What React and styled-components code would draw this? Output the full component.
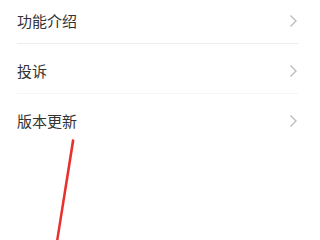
import React from "react";
import styled, { createGlobalStyle } from "styled-components";

const GlobalStyle = createGlobalStyle`
  html, body {
    margin: 0;
    padding: 0;
    background: #ffffff;
    overflow: hidden;
  }
  body {
    font-family: "Noto Sans CJK SC", "Noto Sans", sans-serif;
  }
`;

const items = [
  { label: "功能介绍", line: "#ececec" },
  { label: "投诉", line: "#f5f5f5" },
  { label: "版本更新", line: "transparent" },
];

function App() {
  return (
    <>
      <GlobalStyle />
      <StyledPage>
        <StyledList>
          {items.map((item) => (
            <StyledRow key={item.label} line={item.line}>
              <StyledLabel>{item.label}</StyledLabel>
              <Chevron />
            </StyledRow>
          ))}
        </StyledList>
        <StyledMark width="320" height="240" viewBox="0 0 320 240">
          <polygon points="72,139 74.5,140 58.5,240 56,240" fill="#e8302c" />
        </StyledMark>
      </StyledPage>
    </>
  );
}

function Chevron() {
  return (
    <StyledChevron width="9" height="14" viewBox="0 0 9 14">
      <path d="M1.5 1.5 L7 7 L1.5 12.5" fill="none" stroke="#bdbdbd" strokeWidth="1.4" />
    </StyledChevron>
  );
}

const StyledPage = styled.div`
  position: relative;
  width: 320px;
  height: 240px;
  overflow: hidden;
`;
const StyledList = styled.div`
  display: flex;
  flex-direction: column;
  margin-top: -6px;
  padding: 0 22px 0 17px;
`;
const StyledRow = styled.div`
  display: flex;
  align-items: center;
  justify-content: space-between;
  height: 45px;
  padding-top: 4px;
  border-bottom: 1px solid ${(p) => p.line};
`;
const StyledLabel = styled.span`
  font-size: 15px;
  color: #333333;
  line-height: 1;
`;
const StyledChevron = styled.svg`
  display: block;
  margin-right: 0;
`;
const StyledMark = styled.svg`
  position: absolute;
  left: 0;
  top: 0;
  pointer-events: none;
`;

export default App;
